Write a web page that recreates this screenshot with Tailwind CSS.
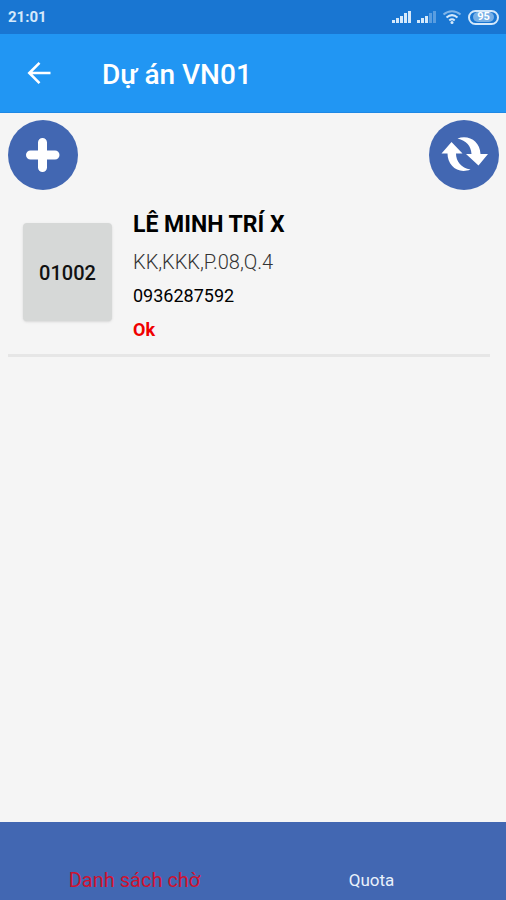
<!DOCTYPE html>
<html lang="vi">
<head>
  <meta charset="UTF-8">
  <meta name="viewport" content="width=device-width, initial-scale=1.0">
  <title>Dự án VN01</title>
  <script src="https://cdn.jsdelivr.net/npm/@tailwindcss/browser@4"></script>
</head>
<body class="min-h-screen flex flex-col bg-[#f5f5f5] font-[Roboto,sans-serif] text-black">
  <!-- Status bar -->
  <div class="h-[34px] shrink-0 bg-[#1976d2] text-[#d5e9fb] flex items-center justify-between pl-2 pr-[7px]">
    <span class="text-[15px] font-bold">21:01</span>
    <div class="flex items-center">
      <svg class="w-[19px] h-3 mr-[6px]" viewBox="0 0 19 12" fill="currentColor">
        <path d="M0 9h3v3H0zM4 7h3v5H4zM8 5h3v7H8zM12 2h3v10h-3zM16 0h3v12h-3z"/>
      </svg>
      <svg class="w-[19px] h-3 mr-[6px]" viewBox="0 0 19 12" fill="currentColor">
        <path d="M0 9h3v3H0zM4 7h3v5H4zM8 5h3v7H8z"/>
        <path opacity=".35" d="M12 2h3v10h-3zM16 0h3v12h-3z"/>
      </svg>
      <svg class="w-5 h-4 mr-[6px]" viewBox="0 0 20 16" fill="none" stroke="currentColor" stroke-width="2">
        <path opacity=".55" d="M1.5 5.5C6.5 1 13.5 1 18.5 5.5"/>
        <path d="M4.5 8.5C8 5.5 12 5.5 15.5 8.5M7.3 11.5C9 10 11 10 12.7 11.5"/>
        <circle cx="10" cy="13.5" r="1.5" fill="currentColor" stroke="none"/>
      </svg>
      <span class="w-[31px] h-[15px] rounded-full border-2 border-current flex items-center justify-center">
        <span class="bg-[#d5e9fb]/50 rounded-full px-1 text-[11px] leading-[10px] font-bold text-white">95</span>
      </span>
    </div>
  </div>

  <!-- App bar -->
  <header class="h-[79px] shrink-0 bg-[#2196f3] text-white flex items-center pl-6 border-b border-[#1e88e5]">
    <button type="button" aria-label="Back" class="w-[30px] h-[30px] mr-12">
      <svg class="w-full h-full" viewBox="0 0 30 30" fill="none" stroke="currentColor" stroke-width="2.6">
        <path d="M26.5 15H6M15.5 4.800L5.3 15L15.5 25.2"/>
      </svg>
    </button>
    <h1 class="pt-1 text-[28px] leading-8 font-medium">Dự án VN01</h1>
  </header>

  <main class="flex-1">
    <!-- Actions -->
    <div class="flex justify-between pl-2 pr-[7px] pt-[7px]">
      <button type="button" aria-label="Add" class="w-[70px] h-[70px] rounded-full bg-[#4267b2] text-white">
        <svg class="w-full h-full" viewBox="0 0 70 70" fill="none" stroke="currentColor" stroke-width="9" stroke-linecap="round">
          <path d="M34.5 22.5v25M22.5 35h24.500"/>
        </svg>
      </button>
      <button type="button" aria-label="Refresh" class="w-[70px] h-[70px] rounded-full bg-[#4267b2] text-white">
        <svg class="w-full h-full" viewBox="0 0 70 70" fill="currentColor">
          <path d="M12.5 33.5L22.500 22L33.500 33.5H27C27 41 32 48 41.5 49.5C29 54.500 18.500 45.500 18.500 33.5Z"/>
          <path d="M59 34L49.500 45.500L37 34H42.5C42 26 37.500 20.500 28.5 18.5C40 14.500 51 21.500 51.500 34Z"/>
        </svg>
      </button>
    </div>

    <!-- Contact -->
    <article class="ml-2 mr-4 mt-4 pb-[6px] border-b-3 border-[#e6e6e6] flex">
      <button type="button" class="w-[89px] h-[98px] mt-[17px] ml-[15px] mr-[21px] pt-[2px] rounded-sm bg-[#d6d8d7] shadow-sm text-xl font-medium text-[#111]">01002</button>
      <div>
        <h2 class="text-[23px] leading-[38px] font-bold">LÊ MINH TRÍ X</h2>
        <p class="text-xl leading-9 font-light text-[#333]">KK,KKK,P.08,Q.4</p>
        <p class="text-lg leading-8">0936287592</p>
        <p class="text-lg leading-9 font-bold text-[#f00000]">Ok</p>
      </div>
    </article>
  </main>

  <!-- Bottom tabs -->
  <nav class="h-[78px] shrink-0 bg-[#4267b2] grid grid-cols-2 items-end text-center pb-2">
    <a href="#waiting" class="pl-4 text-xl leading-6 text-[#cf1230]">Danh sách chờ</a>
    <a href="#quota" class="pr-4 text-[17px] leading-6 text-[#e9f1fb]">Quota</a>
  </nav>
</body>
</html>
